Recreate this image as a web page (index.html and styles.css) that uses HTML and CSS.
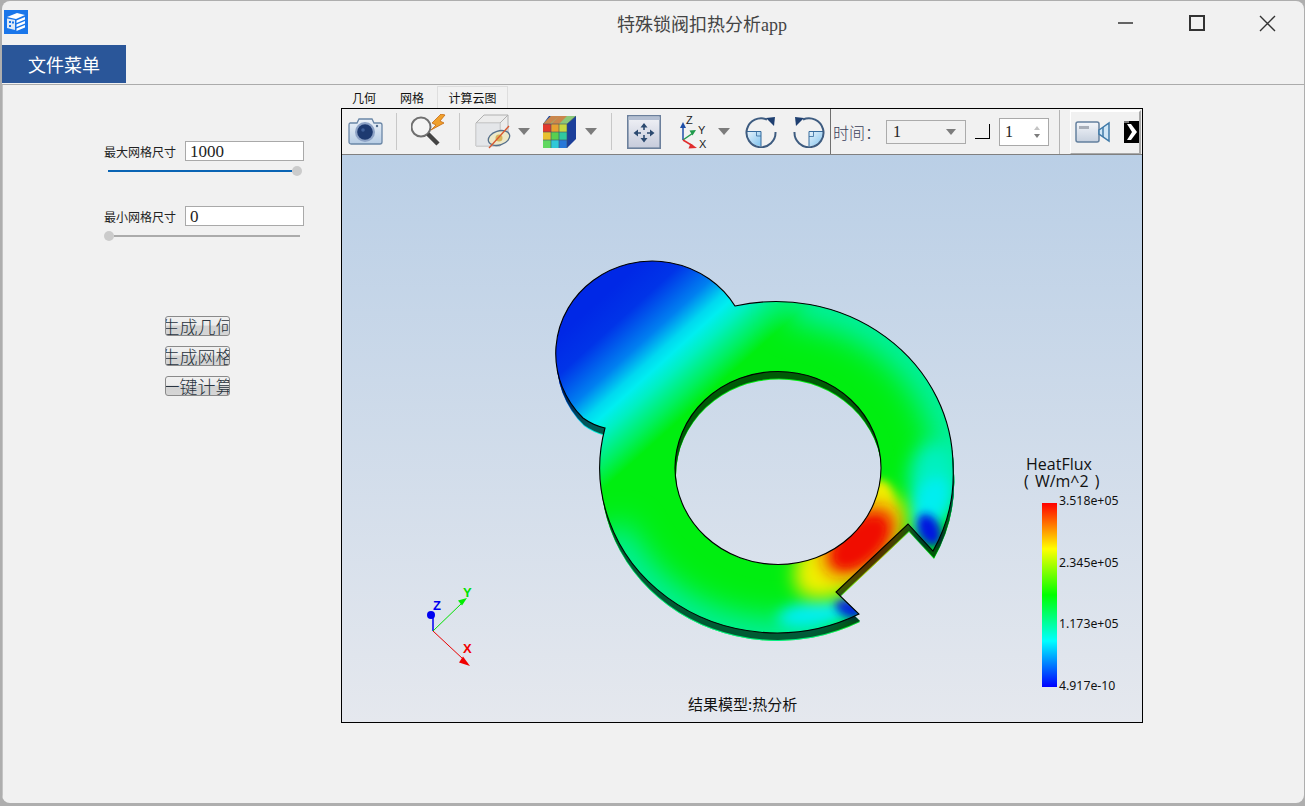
FILE: index.html
```html
<!DOCTYPE html>
<html lang="zh">
<head>
<meta charset="utf-8">
<title>特殊锁阀扣热分析app</title>
<link rel="stylesheet" href="styles.css">
</head>
<body>
<div class="window">
  <header class="titlebar">
    <svg class="logo" viewBox="0 0 24 24"><rect width="24" height="24" fill="#1a76ea"/><path d="M3 7 13 3l8 2-9 4z" fill="#fff"/><path d="M3 8.500 11 10v10l-8-2z" fill="#dfe9f5"/><path d="M12.500 10.500 21 7v2.500l-8.500 3.500zM12.500 14.500 21 11v2.500L12.500 17zM12.500 18.500 21 15v2.500L12.500 21z" fill="#fff"/><path d="M5 11h2v2H5zM8 11.500h2v2H8zM5 15h2v2H5z" fill="#1a76ea"/></svg>
    <div class="title">特殊锁阀扣热分析app</div>
    <div class="winctl">
      <svg viewBox="0 0 71 44"><path d="M28 22h15" stroke="#333" stroke-width="1.500"/></svg>
      <svg viewBox="0 0 71 44"><rect x="29" y="15" width="14" height="14" fill="none" stroke="#333" stroke-width="2"/></svg>
      <svg viewBox="0 0 71 44"><path d="M28 15l15 15M43 15 28 30" stroke="#333" stroke-width="1.400" fill="none"/></svg>
    </div>
  </header>
  <nav class="menubar"><div class="menu-tab">文件菜单</div></nav>
  <main class="main">
    <section class="side">
      <div class="field field-first"><span class="field-label">最大网格尺寸</span><div class="input">1000</div></div>
      <div class="slider slider-max"><span class="fill fill-blue"></span><span class="knob"></span></div>
      <div class="field field-second"><span class="field-label">最小网格尺寸</span><div class="input">0</div></div>
      <div class="slider slider-min"><span class="knob"></span><span class="fill fill-grey"></span></div>
      <div class="actions">
        <button class="act">生成几何</button>
        <button class="act">生成网格</button>
        <button class="act">一键计算</button>
      </div>
    </section>
    <section class="viewer">
      <div class="tabs">
        <span class="tab tab-a">几何</span>
        <span class="tab tab-b">网格</span>
        <span class="tab tab-on">计算云图</span>
      </div>
      <div class="frame">
        <div class="toolbar">
          <svg class="ic ic-cam" viewBox="0 0 35 29">
            <defs><linearGradient id="camg" x1="0" y1="0" x2="0" y2="1"><stop offset="0" stop-color="#eef3f9"/><stop offset="1" stop-color="#b6cce4"/></linearGradient></defs>
            <path d="M2 6h7l2-4h13l2 4h6a2 2 0 0 1 2 2v17a2 2 0 0 1-2 2H3a2 2 0 0 1-2-2V8a2 2 0 0 1 1-2z" fill="url(#camg)" stroke="#6a86a6" stroke-width="1.300"/>
            <circle cx="17" cy="15" r="10" fill="#8ea3c6"/><circle cx="17" cy="15" r="7.800" fill="#1e3a70"/><circle cx="15" cy="13" r="1.800" fill="#3f5f98"/><circle cx="29" cy="9" r="1.200" fill="#506a8c"/>
          </svg>
          <span class="sep sep-a"></span>
          <svg class="ic ic-mag" viewBox="0 0 35 35">
            <path d="M30 0 21 9l4 2-5 5 13-7-4-2 5-6z" fill="#f0a02c" stroke="#c56a12" stroke-width=".8"/>
            <circle cx="10" cy="13" r="9.500" fill="#f4f4f4" stroke="#707070" stroke-width="2"/><path d="M17 20l10 10" stroke="#444" stroke-width="4.500"/>
          </svg>
          <span class="sep sep-b"></span>
          <svg class="ic ic-cube" viewBox="0 0 36 35">
            <path d="M1 9 9 1h24v22l-8 9H1z" fill="#ececec" stroke="#b0b0b0"/><path d="M1 9h24v23M25 9l8-8" fill="none" stroke="#b0b0b0"/><path d="M1 9h24v23H1z" fill="#e0e3e8" opacity=".6"/>
            <ellipse cx="24" cy="24" rx="11" ry="7" transform="rotate(-18 24 24)" fill="#ece8c8" stroke="#56708c" stroke-width="1.300"/><circle cx="24" cy="24" r="3.500" fill="#d8b45a"/>
            <path d="M14 34 34 12" stroke="#d8572f" stroke-width="1.300"/>
          </svg>
          <svg class="ic drop drop-a" viewBox="0 0 12 7"><path d="M0 0h12L6 7z" fill="#7c7c7c"/></svg>
          <svg class="ic ic-grid" viewBox="0 0 34 33">
            <path d="M7 1h27v23l-9 9H1V9z" fill="#1c3f9a"/><path d="M1 9 9 1h25l-9 8z" fill="#8cc87a"/><path d="M9 1h8l-9 8H1zM17 1h8l-8 8H9z" fill="#d67a44" opacity=".85"/>
            <rect x="1" y="9" width="8" height="8" fill="#e2382c"/><rect x="9" y="9" width="8" height="8" fill="#e8a030"/><rect x="17" y="9" width="8" height="8" fill="#c8d840"/>
            <rect x="1" y="17" width="8" height="8" fill="#e8c030"/><rect x="9" y="17" width="8" height="8" fill="#58d050"/><rect x="17" y="17" width="8" height="8" fill="#30c8a0"/>
            <rect x="1" y="25" width="8" height="8" fill="#60d860"/><rect x="9" y="25" width="8" height="8" fill="#30c8d8"/><rect x="17" y="25" width="8" height="8" fill="#2878d8"/>
            <path d="M1 9h24v24M9 9v24M17 9v24M1 17h24M1 25h24M25 9l9-8" stroke="#42506a" stroke-width=".6" fill="none"/>
          </svg>
          <svg class="ic drop drop-b" viewBox="0 0 12 7"><path d="M0 0h12L6 7z" fill="#7c7c7c"/></svg>
          <span class="sep sep-c"></span>
          <svg class="ic ic-fit" viewBox="0 0 34 34">
            <defs><linearGradient id="fitg" x1="0" y1="0" x2="0" y2="1"><stop offset="0" stop-color="#f2f3f7"/><stop offset="1" stop-color="#c6cbdb"/></linearGradient></defs>
            <rect x=".8" y=".8" width="32.400" height="32.400" fill="url(#fitg)" stroke="#6c809c" stroke-width="1.600"/><rect x="1.500" y="1.500" width="31" height="3.500" fill="#b4bfd2"/>
            <path d="M17 12v3M17 20v3M11 18h3M20 18h3" stroke="#2c4a70" stroke-width="1.600"/><path d="M17 8l-3.500 4.500h7zM17 27.500 13.500 23h7zM6.500 18l4.500-3.500v7zM27.500 18 23 14.500v7z" fill="#2c4a70"/>
          </svg>
          <svg class="ic ic-axes" viewBox="0 0 28 36">
            <path d="M3 26V12" stroke="#1f4fa8" stroke-width="1.500"/><path d="M3 8 0 14h6z" fill="#1f4fa8"/>
            <path d="M3 26 13 19" stroke="#1f9a4c" stroke-width="1.500"/><path d="M16 16l-6.500.5 3 5z" fill="#1f9a4c"/>
            <path d="M3 26 13 32" stroke="#e02c2c" stroke-width="1.500"/><path d="M17 34l-6.500-4.500-2 5z" fill="#e02c2c"/>
            <text class="axis-tiny" x="6" y="10">Z</text><text class="axis-tiny" x="18" y="20">Y</text><text class="axis-tiny" x="19" y="34">X</text>
          </svg>
          <svg class="ic drop drop-c" viewBox="0 0 12 7"><path d="M0 0h12L6 7z" fill="#7c7c7c"/></svg>
          <svg class="ic ic-rot ic-rot-a" viewBox="0 0 32 32">
            <defs><linearGradient id="rotg" x1="0" y1="0" x2="1" y2="1"><stop offset="0" stop-color="#eaf4fb"/><stop offset="1" stop-color="#7fc2ee"/></linearGradient></defs>
            <path d="M1.500 15.500H16V30A14.500 14.500 0 0 1 1.500 15.500z" fill="url(#rotg)"/><path d="M1.500 15.500H16V30" fill="none" stroke="#356a9c" stroke-width="1"/><path d="M16 20h-4.500v-4.500" fill="none" stroke="#356a9c" stroke-width=".8"/>
            <path d="M22 3.500A14.500 14.500 0 1 0 30.500 16" fill="none" stroke="#3e5c80" stroke-width="2"/><path d="M21 2l9-1-1 9z" fill="#1e3f70"/>
          </svg>
          <svg class="ic ic-rot ic-rot-b" viewBox="0 0 32 32">
            <path d="M16 15.500h14.500A14.500 14.500 0 0 1 16 30z" fill="url(#rotg)"/><path d="M16 30V15.500h14.500" fill="none" stroke="#356a9c" stroke-width="1"/><path d="M16 20.500h4.500v-5" fill="none" stroke="#356a9c" stroke-width=".8"/>
            <path d="M10 3.500A14.500 14.500 0 1 1 1.500 16" fill="none" stroke="#3e5c80" stroke-width="2"/><path d="M11 2 2 1l1 9z" fill="#1e3f70"/>
          </svg>
          <span class="vline"></span>
          <span class="time-label">时间：</span>
          <div class="combo"><span>1</span><svg class="drop-s" viewBox="0 0 10 6"><path d="M0 0h10L5 6z" fill="#7c7c7c"/></svg></div>
          <span class="check"></span>
          <div class="spin"><span>1</span><span class="spin-arrows"><i class="up"></i><i class="down"></i></span></div>
          <span class="sep sep-d"></span>
          <div class="endbar">
            <svg class="ic-video" viewBox="0 0 36 22">
              <defs><linearGradient id="vidg" x1="0" y1="0" x2="0" y2="1"><stop offset="0" stop-color="#f4f6fa"/><stop offset="1" stop-color="#c6d0de"/></linearGradient></defs>
              <rect x="1" y="1" width="23" height="20" rx="2" fill="url(#vidg)" stroke="#64809e" stroke-width="1.500"/><rect x="4" y="5" width="10" height="3" fill="#a8aeb8"/>
              <path d="M24 9l10-7v18l-10-7z" fill="#cfe6f6" stroke="#3f7aa8" stroke-width="1.500"/><path d="M28 6v10" stroke="#3f7aa8" stroke-width="1.500"/>
            </svg>
            <svg class="ic-more" viewBox="0 0 15 22"><rect width="15" height="22" fill="#000"/><path d="M3 3h4l6 8-6 8H3l5-8z" fill="#fff"/><path d="M0 0h5v2H0z" fill="#777"/></svg>
          </div>
        </div>
        <div class="canvas">
          <svg class="scene" viewBox="342 155 800 567">
            <defs>
              <path id="shape" fill-rule="evenodd" clip-rule="evenodd" d="M735 306A177 165 0 0 1 953 466A177 165 0 0 1 933 551L908 524 836 592 859 614A177 165 0 0 1 605 428A60 60 0 0 1 583 418A96.500 92.500 0 1 1 735 306ZM675 468A103 96.500 0 1 0 881 468A103 96.500 0 1 0 675 468Z"/>
              <clipPath id="clip"><use href="#shape"/></clipPath>
              <linearGradient id="lobe" gradientUnits="userSpaceOnUse" x1="610" y1="290" x2="706" y2="396">
                <stop offset="0" stop-color="#0028e6"/><stop offset=".2" stop-color="#0034e8"/><stop offset=".42" stop-color="#0080f0"/><stop offset=".55" stop-color="#00d8f0"/><stop offset=".62" stop-color="#00eef0"/><stop offset=".72" stop-color="#00f0c0"/><stop offset=".88" stop-color="#00f060"/><stop offset="1" stop-color="#00ee10"/>
              </linearGradient>
              <filter id="b16" x="-50%" y="-50%" width="200%" height="200%"><feGaussianBlur stdDeviation="16"/></filter>
              <filter id="b9" x="-50%" y="-50%" width="200%" height="200%"><feGaussianBlur stdDeviation="9"/></filter>
              <filter id="b7" x="-60%" y="-60%" width="220%" height="220%"><feGaussianBlur stdDeviation="7"/></filter>
              <filter id="b5" x="-50%" y="-50%" width="200%" height="200%"><feGaussianBlur stdDeviation="4"/></filter>
              <g id="heat">
                <rect x="500" y="230" width="500" height="430" fill="url(#lobe)"/>
                <path d="M790 300A177 165 0 0 1 955 480" fill="none" stroke="#00f0a8" stroke-width="44" filter="url(#b16)"/>
                <path d="M610 530A177 165 0 0 0 830 630" fill="none" stroke="#00f0b0" stroke-width="36" filter="url(#b16)"/>
                <ellipse cx="815" cy="614" rx="38" ry="13" transform="rotate(-8 815 614)" fill="#00eef0" filter="url(#b7)"/>
                <ellipse cx="849" cy="608" rx="15" ry="9" transform="rotate(25 849 608)" fill="#0020e0" filter="url(#b5)"/>
                <ellipse cx="935" cy="480" rx="26" ry="38" fill="#00f0c0" filter="url(#b9)"/>
                <ellipse cx="930" cy="505" rx="17" ry="30" transform="rotate(22 930 505)" fill="#00eef0" filter="url(#b7)"/>
                <ellipse cx="929" cy="530" rx="11" ry="17" transform="rotate(-25 929 530)" fill="#0018e0" filter="url(#b5)"/>
                <ellipse cx="850" cy="546" rx="68" ry="36" transform="rotate(-42 850 546)" fill="#f0f000" filter="url(#b9)"/>
                <ellipse cx="880" cy="500" rx="13" ry="20" fill="#f0f000" filter="url(#b5)"/>
                <ellipse cx="860" cy="541" rx="42" ry="24" transform="rotate(-42 860 541)" fill="#f01800" filter="url(#b9)"/>
                <ellipse cx="860" cy="543" rx="30" ry="15" transform="rotate(-42 860 543)" fill="#f00800" filter="url(#b5)"/>
              </g>
            </defs>
            <g transform="translate(1 8)"><g clip-path="url(#clip)"><use href="#heat" transform="translate(-1 -8)"/></g></g>
            <g transform="translate(1 7)"><g clip-path="url(#clip)"><use href="#heat" transform="translate(-1 -7)"/><rect x="500" y="230" width="500" height="430" fill="#000" opacity=".62"/></g></g>
            <g clip-path="url(#clip)"><use href="#heat"/></g>
            <use href="#shape" fill="none" stroke="#000" stroke-width="1.100"/>
            <path d="M433 631V618" stroke="#0000f0" stroke-width="1.500"/><circle cx="431" cy="615" r="4" fill="#0000f0"/>
            <path d="M433 631 462 603" stroke="#00e000"/><path d="M467 598l-9 2.500 4 5z" fill="#00ee00"/>
            <path d="M433 631 463 659" stroke="#e80000"/><path d="M470 666l-11-3.500 4-6z" fill="#f00000"/>
            <text class="axis-z" x="433" y="610">Z</text>
            <text class="axis-y" x="463" y="597">Y</text>
            <text class="axis-x" x="463" y="653">X</text>
          </svg>
          <div class="legend">
            <div class="legend-title"><span class="legend-name">HeatFlux</span><span>( W/m^2 )</span></div>
            <div class="legend-body">
              <div class="legend-bar"></div>
              <div class="legend-vals"><span>3.518e+05</span><span>2.345e+05</span><span>1.173e+05</span><span>4.917e-10</span></div>
            </div>
          </div>
          <div class="caption">结果模型:热分析</div>
        </div>
      </div>
    </section>
  </main>
</div>
</body>
</html>
```
FILE: styles.css
```css
* { box-sizing: border-box; }
html, body { margin: 0; height: 100%; overflow: hidden; }
body { background: #aeaeae; padding: 1px 1px 3px 2px; font-family: "Noto Sans CJK SC", sans-serif; }
.window { height: 802px; background: #f1f1f1; border-radius: 8px; display: flex; flex-direction: column; overflow: hidden; }

.titlebar { height: 44px; display: flex; align-items: center; flex: none; }
.logo { width: 24px; height: 24px; margin: 0 0 0 2px; flex: none; position: relative; top: -1px; }
.title { flex: 1; padding-left: 286px; text-align: center; font-size: 18px; color: #444; font-family: "Liberation Serif", "Noto Sans CJK SC", serif; font-weight: 400; }
.winctl { display: flex; flex: none; margin-right: 1px; }
.winctl svg { width: 71px; height: 44px; display: block; }

.menubar { height: 40px; flex: none; padding-bottom: 1px; border-bottom: 1px solid #ababab; }
.menu-tab { width: 124px; height: 38px; background: #2a5699; color: #fff; font-size: 18px; line-height: 38px; text-align: center; }

.main { flex: 1; display: flex; padding-top: 1px; border-left: 1px solid #c4c4c4; min-height: 0; }
.side { width: 338px; flex: none; display: flex; flex-direction: column; padding-top: 55px; }
.field { display: flex; align-items: center; margin-left: 101px; gap: 9px; height: 20px; }
.field-second { margin-top: 30px; }
.field-label { width: 72px; font-size: 12px; white-space: nowrap; color: #222; }
.input { width: 119px; height: 20px; border: 1px solid #a9a9a9; background: #fff; font: 17px/20px "Liberation Serif", serif; padding-left: 4px; color: #222; }
.slider { display: flex; align-items: center; height: 10px; margin-top: 5px; }
.slider-max { margin-left: 105px; width: 194px; }
.slider-min { margin-left: 101px; width: 196px; }
.fill { flex: 1; height: 2px; }
.fill-blue { background: #0a64b4; }
.fill-grey { background: #ababab; }
.knob { width: 10px; height: 10px; border-radius: 50%; background: #cbcbcb; flex: none; }

.actions { display: flex; flex-direction: column; gap: 10px; margin: 75px 0 0 162px; }
.act { width: 65px; height: 20px; padding: 0; display: flex; justify-content: center; align-items: center; overflow: hidden; white-space: nowrap; border: 1px solid #8a8a8a; border-radius: 3px; font: 18px/18px "Noto Sans CJK SC", sans-serif; font-weight: 300; color: #2a3440; background: linear-gradient(#f0f0f0 0, #ececec 45%, #d2d2d2 50%, #d6d6d6 100%); }

.viewer { width: 802px; flex: none; display: flex; flex-direction: column; }
.tabs { height: 22px; display: flex; font-size: 12px; color: #111; flex: none; }
.tab { line-height: 24px; white-space: nowrap; }
.tab-a { margin-left: 11px; }
.tab-b { margin-left: 24px; }
.tab-on { margin-left: 13px; width: 71px; text-align: center; border: 1px solid #dedede; border-bottom: 0; background: #f2f2f2; line-height: 22px; }

.frame { width: 802px; height: 615px; border: 1px solid #000; display: flex; flex-direction: column; background: #f1f1f1; }
.toolbar { height: 46px; flex: none; border-bottom: 1px solid #808080; display: flex; align-items: center; padding-left: 6px; }
.ic { flex: none; display: block; }
.sep { width: 1px; height: 37px; background: #c8c8c8; flex: none; }
.sep-a { margin-left: 13px; }
.sep-b { margin-left: 13px; }
.sep-c { margin-left: 14px; }
.sep-d { margin-left: 10px; height: 44px; background: #b4b4b4; }
.ic-cam { width: 35px; height: 29px; }
.ic-mag { width: 35px; height: 35px; margin-left: 14px; }
.ic-cube { width: 36px; height: 35px; margin-left: 15px; }
.drop { width: 12px; height: 7px; }
.drop-a { margin-left: 7px; }
.ic-grid { width: 34px; height: 33px; margin-left: 12px; }
.drop-b { margin-left: 9px; }
.ic-fit { width: 34px; height: 34px; margin-left: 15px; }
.ic-axes { width: 28px; height: 36px; margin-left: 19px; }
.drop-c { margin-left: 10px; }
.ic-rot { width: 32px; height: 32px; }
.ic-rot-a { margin-left: 15px; }
.ic-rot-b { margin-left: 16px; }
.axis-tiny { font: 11px "Liberation Sans", sans-serif; fill: #222; }
.vline { width: 1px; height: 45px; background: #707070; margin-left: 5px; flex: none; }
.time-label { font: 16px/20px "Noto Sans CJK SC", sans-serif; font-weight: 300; color: #3a3f5a; margin-left: 2px; width: 53px; white-space: nowrap; flex: none; }
.combo { width: 80px; height: 24px; border: 1px solid #ababab; display: flex; align-items: center; justify-content: space-between; padding: 0 9px 0 6px; font: 16px "Liberation Serif", serif; flex: none; color: #222; }
.drop-s { width: 10px; height: 6px; display: block; }
.check { width: 15px; height: 15px; margin-left: 9px; border-right: 1px solid #000; border-bottom: 1px solid #000; flex: none; }
.spin { width: 50px; height: 28px; margin-left: 9px; background: #fff; border: 1px solid #a9a9a9; display: flex; align-items: center; justify-content: space-between; padding: 0 8px 0 5px; font: 16px "Liberation Serif", serif; color: #222; flex: none; }
.spin-arrows { display: flex; flex-direction: column; gap: 4px; }
.up { display: block; width: 0; height: 0; border: 3.500px solid transparent; border-top: 0; border-bottom: 4px solid #c4c4c4; }
.down { display: block; width: 0; height: 0; border: 3.500px solid transparent; border-bottom: 0; border-top: 4px solid #7c7c7c; }
.endbar { width: 71px; height: 44px; margin-left: 10px; flex: none; border-top: 2px solid #fff; border-left: 1px solid #fff; border-right: 2px solid #a8a8a8; border-bottom: 1px solid #a8a8a8; display: flex; align-items: center; padding-left: 4px; }
.ic-video { width: 36px; height: 22px; display: block; flex: none; }
.ic-more { width: 15px; height: 22px; display: block; flex: none; margin: -1px 0 0 13px; }

.canvas { flex: 1; position: relative; background: linear-gradient(#bacfe6, #e5e8ee); overflow: hidden; }
.scene { position: absolute; left: 0; top: 0; width: 800px; height: 567px; display: block; }
.axis-z, .axis-y, .axis-x { font: bold 13px "Liberation Sans", sans-serif; }
.axis-z { fill: #0000f0; }
.axis-y { fill: #00e000; }
.axis-x { fill: #f00000; }
.legend { position: absolute; left: 678px; top: 301px; width: 110px; }
.legend-title { font: 16px/17px "Open Sans", sans-serif; color: #111; padding-left: 4px; word-spacing: 2px; white-space: nowrap; display: flex; flex-direction: column; height: 34px; }
.legend-name { margin-left: 2px; word-spacing: 0; }
.legend-body { display: flex; margin: 13px 0 0 22px; height: 184px; gap: 2px; }
.legend-bar { width: 15px; height: 184px; background: linear-gradient(#ff0000, #ffff00 25%, #00ff00 50%, #00ffff 75%, #0000ff); flex: none; }
.legend-vals { display: flex; flex-direction: column; justify-content: space-between; font: 12.300px/14px "Noto Sans", sans-serif; color: #111; margin: -9px 0 -6px; white-space: nowrap; }
.caption { position: absolute; left: 346px; bottom: 9px; font-size: 15px; line-height: 18px; color: #111; white-space: nowrap; }
```
